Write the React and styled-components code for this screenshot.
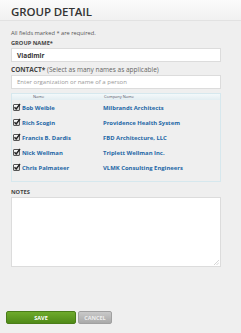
import React from "react";
import styled, { createGlobalStyle } from "styled-components";

const GlobalStyle = createGlobalStyle`
  html, body {
    margin: 0;
    padding: 0;
    background: #efefef;
  }
  body {
    font-family: "Open Sans", "DejaVu Sans", sans-serif;
    color: #333;
  }
`;

const CONTACTS = [
  { name: "Bob Weible", company: "Milbrandt Architects" },
  { name: "Rich Scogin", company: "Providence Health System" },
  { name: "Francis B. Dardis", company: "FBD Architecture, LLC" },
  { name: "Nick Wellman", company: "Triplett Wellman Inc." },
  { name: "Chris Palmateer", company: "VLMK Consulting Engineers" },
];

const Page = styled.div`
  width: 241px;
  height: 333px;
  background: #efefef;
  overflow: hidden;
`;

const Header = styled.div`
  height: 20px;
  padding: 0 11px;
  display: flex;
  align-items: center;
  background: linear-gradient(#fbfbfb, #f1f1f1);
  border-bottom: 1px solid #e2e2e2;
`;

const Title = styled.h1`
  margin: 2px 0 0;
  font-size: 11.5px;
  font-weight: 600;
  letter-spacing: -0.1px;
  color: #333;
`;

const Form = styled.div`
  padding: 8px 20px 0 11px;
  display: flex;
  flex-direction: column;
`;

const Note = styled.div`
  font-size: 5.7px;
  color: #555;
  line-height: 8px;
`;

const Label = styled.div`
  margin-top: ${(p) => p.top || 3}px;
  font-size: 5.7px;
  font-weight: 700;
  color: #444;
  line-height: 8px;

  span {
    font-weight: 400;
    color: #666;
  }
`;

const BigLabel = styled(Label)`
  font-size: 6.5px;
`;

const Input = styled.div`
  margin-top: ${(p) => p.top || 1}px;
  height: 14px;
  box-sizing: border-box;
  background: #fff;
  border: 1px solid #dcdcdc;
  padding: 0 5px;
  display: flex;
  align-items: center;
  font-size: ${(p) => (p.placeholder ? 6 : 6.5)}px;
  font-weight: ${(p) => (p.placeholder ? 400 : 700)};
  color: ${(p) => (p.placeholder ? "#999" : "#333")};
`;

const Table = styled.div`
  margin-top: 4px;
  height: 89px;
  box-sizing: border-box;
  border: 1px solid #d6e8ee;
  padding-bottom: 4px;
`;

const HeadRow = styled.div`
  display: grid;
  grid-template-columns: 92px 1fr;
  height: 6px;
  background: linear-gradient(#f3f8fa, #e3eef2);
  font-size: 4px;
  line-height: 6px;
  color: #556;
  span:first-child {
    padding-left: 21px;
  }
`;

const Row = styled.div`
  display: grid;
  grid-template-columns: 9px 81px 1fr;
  align-items: center;
  height: 15px;
  padding-left: 1px;
  font-size: 5.9px;
  font-weight: 700;
  color: #1e67a6;
  &:first-of-type {
    height: 13px;
  }
`;

const Check = styled.span`
  width: 5px;
  height: 5px;
  border: 1px solid #555;
  background: linear-gradient(#fff, #ccc);
  border-radius: 1px;
  position: relative;
  svg {
    position: absolute;
    left: -1px;
    top: -2px;
  }
`;

const Textarea = styled.div`
  margin-top: 1px;
  height: 70px;
  box-sizing: border-box;
  background: #fff;
  border: 1px solid #dcdcdc;
  position: relative;
`;

const Grip = styled.svg`
  position: absolute;
  right: 1px;
  bottom: 1px;
`;

const Buttons = styled.div`
  margin-top: 44px;
  padding-left: 6px;
  display: flex;
  gap: 2px;
`;

const Button = styled.div`
  height: 13px;
  width: ${(p) => p.w}px;
  box-sizing: border-box;
  border-radius: 2px;
  display: flex;
  align-items: center;
  justify-content: center;
  font-size: 5.5px;
  font-weight: 700;
  background: ${(p) =>
    p.green
      ? "linear-gradient(#6eaa2c, #4f8a17)"
      : "linear-gradient(#c9c9c9, #a9a9a9)"};
  border: 1px solid ${(p) => (p.green ? "#4a7d18" : "#a0a0a0")};
  color: ${(p) => (p.green ? "#fff" : "#eee")};
`;

export default function App() {
  return (
    <Page>
      <GlobalStyle />
      <Header>
        <Title>GROUP DETAIL</Title>
      </Header>
      <Form>
        <Note>All fields marked * are required.</Note>
        <Label top={2}>GROUP NAME*</Label>
        <Input>Vladimir</Input>
        <BigLabel top={4}>
          CONTACT* <span>(Select as many names as applicable)</span>
        </BigLabel>
        <Input placeholder="1">Enter organization or name of a person</Input>
        <Table>
          <HeadRow>
            <span>Name</span>
            <span>Company Name</span>
          </HeadRow>
          {CONTACTS.map((c) => (
            <Row key={c.name}>
              <Check>
                <svg width="8" height="8" viewBox="0 0 8 8">
                  <path d="M1.5 4.2 L3.2 6 L7 1" fill="none" stroke="#222" strokeWidth="1.4" />
                </svg>
              </Check>
              <span>{c.name}</span>
              <span>{c.company}</span>
            </Row>
          ))}
        </Table>
        <Label top={6}>NOTES</Label>
        <Textarea>
          <Grip width="5" height="5" viewBox="0 0 5 5">
            <path d="M5 0 L0 5 M5 2.5 L2.5 5" stroke="#bbb" strokeWidth="0.6" />
          </Grip>
        </Textarea>
      </Form>
      <Buttons>
        <Button green w={70}>SAVE</Button>
        <Button w={34}>CANCEL</Button>
      </Buttons>
    </Page>
  );
}
